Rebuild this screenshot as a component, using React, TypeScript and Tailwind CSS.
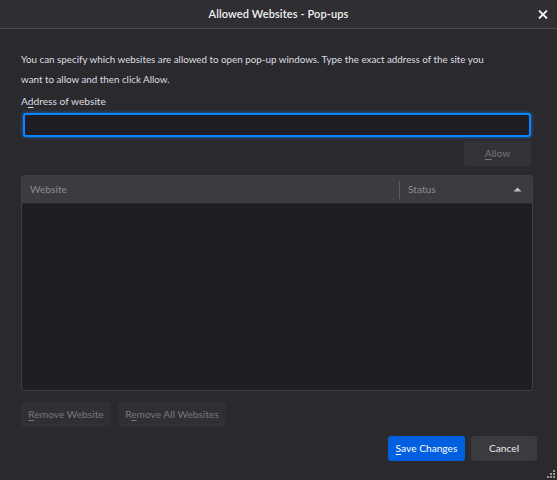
import React from "react";

const font = { fontFamily: 'Lato, "Noto Sans", sans-serif' };

export default function App() {
  return (
    <div
      className="w-[557px] h-[480px] bg-[#2a2a2e] flex flex-col text-[10px] text-[#e2e2e4] overflow-hidden relative"
      style={font}
    >
      {/* title bar */}
      <div className="h-[29px] shrink-0 bg-[#2e2e33] border-b border-[#4b4b50] flex items-center justify-center relative">
        <span className="text-[11px] font-semibold text-[#f2f2f4] tracking-[0.1px]">Allowed Websites - Pop-ups</span>
        <svg className="absolute right-[9px] top-[10px]" width="10" height="9" viewBox="0 0 10 9">
          <path d="M1 0.5 L9 8.5 M9 0.5 L1 8.5" stroke="#f4f4f4" strokeWidth="1.8" />
        </svg>
      </div>

      <div className="flex flex-col pl-[21px] pr-[24px] pt-[20px]">
        <p className="leading-[20px] text-[9.8px] text-[#dedee0] whitespace-nowrap">
          You can specify which websites are allowed to open pop-up windows. Type the exact address of the site you
          <br />
          want to allow and then click Allow.
        </p>
        <label className="mt-[3px] leading-[19px] text-[10.2px] text-[#dedee0]">
          A<span className="underline underline-offset-2">d</span>dress of website
        </label>
        <div className="mt-[2px] ml-[2px] mr-[2px] h-[24px] rounded-[3px] border-2 border-[#0a84ff] bg-[#1e1d23] shadow-[0_0_3px_1px_rgba(10,132,255,0.45)]" />
        <div className="flex justify-end mt-[4px] mr-[2px]">
          <button className="w-[67px] h-[25px] rounded-[3px] bg-[#323237] text-[#78787d] text-[10.2px] whitespace-nowrap">
            <span className="underline underline-offset-2">A</span>llow
          </button>
        </div>

        <div className="mt-[9px] h-[216px] rounded-[3px] border border-[#3e3e43] bg-[#1f1e24] flex flex-col overflow-hidden">
          <div className="h-[28px] shrink-0 bg-[#3b3b40] border-b border-[#2a2a2e] flex items-center text-[10.2px] text-[#8d8d92]">
            <div className="w-[377px] pl-[8px]">Website</div>
            <div className="w-px h-[18px] bg-[#5a5a5f]" />
            <div className="flex-1 pl-[8px]">Status</div>
            <svg className="mr-[10px]" width="9" height="5" viewBox="0 0 9 5">
              <path d="M0.5 4.5 L4.5 0.5 L8.5 4.5 Z" fill="#bdbdc2" />
            </svg>
          </div>
          <div className="flex-1" />
        </div>

        <div className="flex gap-[7px] mt-[11px]">
          <button className="w-[90px] h-[25px] rounded-[3px] bg-[#2f2f34] text-[#78787d] text-[10.2px] whitespace-nowrap">
            <span className="underline underline-offset-2">R</span>emove Website
          </button>
          <button className="w-[108px] h-[25px] rounded-[3px] bg-[#2f2f34] text-[#78787d] text-[10.2px] whitespace-nowrap">
            R<span className="underline underline-offset-2">e</span>move All Websites
          </button>
        </div>

        <div className="flex justify-end gap-[6px] mt-[9px] -mr-[4px]">
          <button className="w-[77px] h-[25px] rounded-[3px] bg-[#0060df] text-white text-[10.2px] whitespace-nowrap">
            <span className="underline underline-offset-2">S</span>ave Changes
          </button>
          <button className="w-[66px] h-[25px] rounded-[3px] bg-[#3a3a3f] text-[#ececee] text-[10.2px] whitespace-nowrap">
            Cancel
          </button>
        </div>
      </div>

      <svg className="absolute right-[2px] bottom-[2px]" width="8" height="8" viewBox="0 0 8 8">
        <rect x="6" y="0" width="2" height="2" fill="#9a9aa0" />
        <rect x="3" y="3" width="2" height="2" fill="#9a9aa0" />
        <rect x="6" y="3" width="2" height="2" fill="#9a9aa0" />
        <rect x="0" y="6" width="2" height="2" fill="#9a9aa0" />
        <rect x="3" y="6" width="2" height="2" fill="#9a9aa0" />
        <rect x="6" y="6" width="2" height="2" fill="#9a9aa0" />
      </svg>
    </div>
  );
}
